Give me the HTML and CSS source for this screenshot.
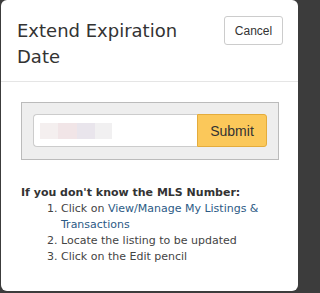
FILE: index.html
```html
<!DOCTYPE html>
<html>
<head>
<meta charset="utf-8">
<link rel="stylesheet" href="styles.css">
</head>
<body>
<div class="modal">
  <div class="modal-header">
    <h2 class="title">Extend Expiration Date</h2>
    <button class="btn-cancel">Cancel</button>
  </div>
  <div class="modal-body">
    <div class="search-box">
      <div class="input-group">
        <div class="input"><span class="redacted"></span></div>
        <button class="btn-submit">Submit</button>
      </div>
    </div>
    <div class="help">
      <p class="help-title">If you don't know the MLS Number:</p>
      <ol class="steps">
        <li>Click on <a href="#">View/Manage My Listings &amp;</a><br><a href="#">Transactions</a></li>
        <li>Locate the listing to be updated</li>
        <li>Click on the Edit pencil</li>
      </ol>
    </div>
  </div>
</div>
</body>
</html>
```

FILE: styles.css
```css
html, body {
  margin: 0;
  padding: 0;
  background: #3c3c3c;
}
body {
  width: 300px;
  height: 293px;
  overflow: hidden;
  font-family: "DejaVu Sans", Verdana, sans-serif;
  color: #333;
}
.modal {
  margin: 0 2px 0 1px;
  height: 291px;
  background: #fff;
  border-radius: 6px;
  box-sizing: border-box;
}
.modal-header {
  display: flex;
  justify-content: space-between;
  align-items: flex-start;
  padding: 16px 15px 0 16px;
  height: 82px;
  box-sizing: border-box;
  border-bottom: 1px solid #e5e5e5;
}
.title {
  margin: 2px 0 0 0;
  font-weight: normal;
  font-size: 18px;
  line-height: 26px;
  width: 190px;
  color: #333;
}
.btn-cancel {
  width: 59px;
  height: 29px;
  background: #fff;
  border: 1px solid #ccc;
  border-radius: 3px;
  font-family: "Liberation Sans", Arial, sans-serif;
  font-size: 12px;
  color: #333;
  padding: 0;
}
.modal-body {
  padding: 20px 19px 0 20px;
}
.search-box {
  background: #eee;
  border: 1px solid #bbb;
  padding: 11px;
  height: 58px;
  box-sizing: border-box;
}
.input-group {
  display: flex;
  height: 33px;
}
.input {
  flex: 1;
  background: #fff;
  border: 1px solid #ccc;
  border-right: none;
  border-radius: 4px 0 0 4px;
  display: flex;
  align-items: center;
  padding-left: 6px;
}
.redacted {
  display: block;
  width: 72px;
  height: 16px;
  background: linear-gradient(to right, #f4efef 0 18px, #f1e5e7 18px 37px, #e9e5ec 37px 55px, #f1f0f1 55px 72px);
}
.btn-submit {
  width: 70px;
  background: #fbc85a;
  border: 1px solid #e4ac3c;
  border-radius: 0 3px 3px 0;
  font-family: "Liberation Sans", Arial, sans-serif;
  font-size: 14px;
  color: #333;
  padding: 0;
}
.help {
  padding-top: 25px;
  font-size: 11px;
}
.help-title {
  margin: 0;
  font-weight: bold;
  line-height: 15px;
}
.steps {
  margin: 1px 0 0 0;
  padding-left: 40px;
  line-height: 16px;
  color: #444;
}
.steps a {
  color: #2c5a85;
  text-decoration: none;
}
```
